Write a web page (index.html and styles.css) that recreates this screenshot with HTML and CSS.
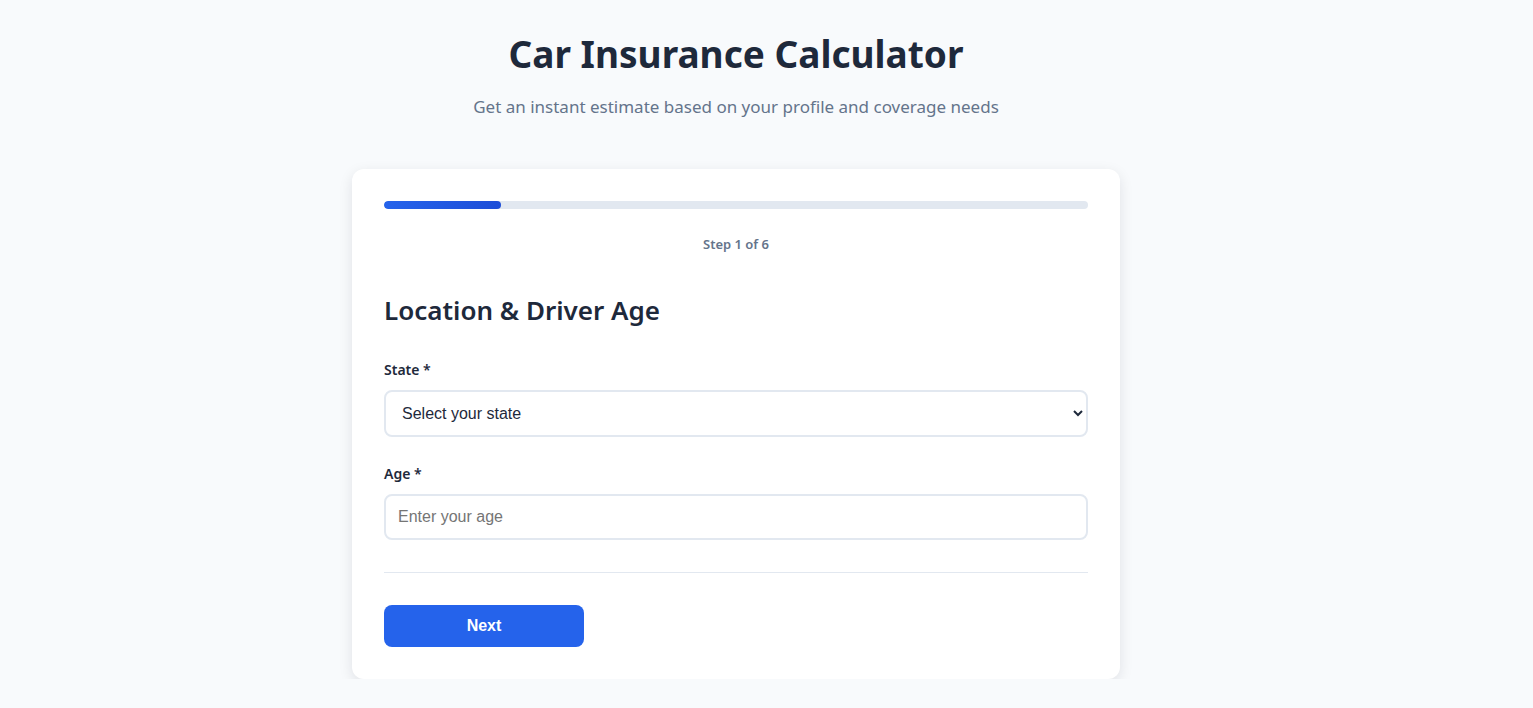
FILE: index.html
```html
<!DOCTYPE html>
<html lang="en">
<head>
<meta charset="utf-8">
<title>Car Insurance Calculator</title>
<link rel="stylesheet" href="styles.css">
</head>
<body>
<div class="page">
  <header class="hero">
    <h1 class="title">Car Insurance Calculator</h1>
    <p class="subtitle">Get an instant estimate based on your profile and coverage needs</p>
  </header>
  <main class="card">
    <div class="progress"><div class="progress-fill" style="width: 16.67%"></div></div>
    <div class="step-text">Step 1 of 6</div>
    <h2 class="section-title">Location &amp; Driver Age</h2>
    <div class="field">
      <label class="label" for="state">State *</label>
      <select id="state" class="control select">
        <option>Select your state</option>
      </select>
    </div>
    <div class="field">
      <label class="label" for="age">Age *</label>
      <input id="age" class="control input" type="number" placeholder="Enter your age">
    </div>
    <div class="actions">
      <button class="btn-primary" type="button">Next</button>
    </div>
  </main>
</div>
</body>
</html>
```

FILE: styles.css
```css
* { box-sizing: border-box; }
html, body { margin: 0; padding: 0; }
body {
  background: #f8fafc;
  font-family: "Noto Sans", "Open Sans", sans-serif;
  color: #1e293b;
}
.page {
  width: 1472px;
  display: flex;
  flex-direction: column;
  align-items: center;
  padding-top: 28px;
}
.hero { text-align: center; }
.title {
  margin: 0;
  font-size: 37px;
  line-height: 52px;
  font-weight: 700;
  color: #1e293b;
}
.subtitle {
  margin: 15px 0 0;
  font-size: 17px;
  line-height: 24px;
  color: #64748b;
}
.card {
  margin-top: 50px;
  width: 768px;
  background: #fff;
  border-radius: 12px;
  box-shadow: 0 4px 14px rgba(15, 23, 42, 0.1);
  padding: 32px;
}
.progress {
  height: 8px;
  background: #e2e8f0;
  border-radius: 4px;
  overflow: hidden;
}
.progress-fill {
  height: 100%;
  border-radius: 4px;
  background: linear-gradient(90deg, #2563eb, #1d4ed8);
}
.step-text {
  margin-top: 26px;
  text-align: center;
  font-size: 13px;
  line-height: 18px;
  font-weight: 600;
  color: #64748b;
}
.section-title {
  margin: 40px 0 0;
  font-size: 26px;
  line-height: 34px;
  font-weight: 600;
  color: #1e293b;
}
.field { margin-top: 33px; }
.field + .field { margin-top: 27px; }
.label {
  display: block;
  font-size: 14px;
  line-height: 20px;
  font-weight: 600;
  color: #1e293b;
  margin-bottom: 10px;
}
.control {
  display: block;
  width: 100%;
  border: 2px solid #e2e8f0;
  border-radius: 8px;
  background: #fff;
  font-family: "Liberation Sans", Arial, sans-serif;
  font-size: 16px;
  color: #1e293b;
  outline: none;
}
.select { height: 47px; padding: 0 12px; }
.input { height: 46px; padding: 0 12px; }
.input::placeholder { color: #757575; }
.actions {
  margin-top: 32px;
  padding-top: 32px;
  border-top: 1px solid #e2e8f0;
}
.btn-primary {
  width: 200px;
  height: 42px;
  border: none;
  border-radius: 8px;
  background: #2563eb;
  color: #fff;
  font-family: "Liberation Sans", Arial, sans-serif;
  font-size: 16px;
  font-weight: 700;
}
```
